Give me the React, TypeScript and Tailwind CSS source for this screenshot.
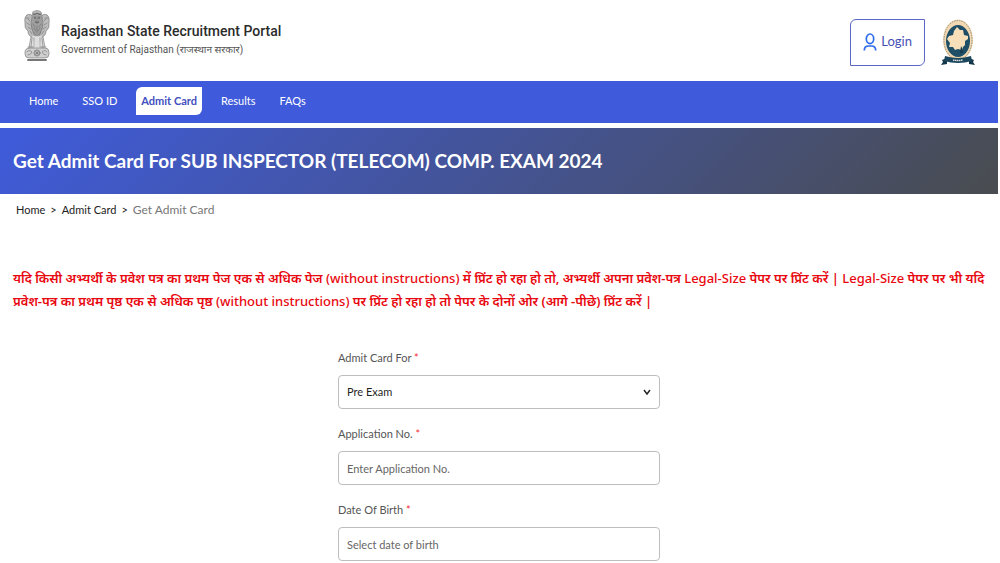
import type { ReactNode } from 'react'

const navItems = ['Home', 'SSO ID', 'Admit Card', 'Results', 'FAQs']

function Emblem() {
  return (
    <svg className="h-[54px] w-7" viewBox="0 0 28 54" fill="none" role="img" aria-label="State Emblem of India">
      <path d="M4 6Q1 8 2 14Q1 19 5 22Q5 27 9 28L19 28Q23 27 23 22Q27 19 26 14Q27 8 24 6Q20 4 19 7L18 3Q14 0 10 3L9 7Q8 4 4 6Z" fill="#bdbdbd" />
      <path d="M9 8Q14 3 19 8L20 17Q18 25 14 27Q10 25 8 17Z" fill="#9f9f9f" />
      <path d="M8 27L6 39H10L11 29L12 39H16L17 29L18 39H22L20 27Z" fill="#dedede" />
      <rect x="2" y="39" width="24" height="10" rx="4" fill="#cfcfcf" />
      <rect x="4" y="50" width="20" height="2" rx="1" fill="#777777" />
      <g stroke="#6f6f6f" strokeWidth="0.6" strokeLinecap="round">
        <path d="M4 6Q1 8 2 14Q1 19 5 22Q5 27 9 28M24 6Q27 8 26 14Q27 19 23 22Q23 27 19 28M9 7Q8 4 4 6M19 7Q20 4 24 6M10 3Q14 0 18 3L19 7M10 3L9 7" />
        <path d="M9 8Q7 14 9 20Q11 26 14 27Q17 26 19 20Q21 14 19 8M10 5Q14 3 18 5M11 8H13M15 8H17M12 12Q14 14 16 12M14 9V11" />
        <path d="M10 15L12 18M18 15L16 18M11 19L13 22M17 19L15 22M14 17V24M5 10L7 12M23 10L21 12M4 14L7 16M24 14L21 16M5 18L8 20M23 18L20 20M3 9H6M22 9H25M7 22L9 25M21 22L19 25M10 23L12 27M18 23L16 27" />
        <path d="M8 28L6 38M9 29L8 38M11 29V38M17 29V38M19 29L20 38M20 28L22 38M5 38H11M17 38H23" />
        <rect x="2" y="39" width="24" height="10" rx="4" />
        <circle cx="14" cy="44" r="3" />
        <path d="M14 41V47M11 44H17M12 42L16 46M16 42L12 46M4 43Q6 40 9 43Q8 46 5 46M24 43Q22 40 19 43Q20 46 23 46" />
      </g>
      <path d="M10 6Q14 3 18 6M11 9H13M15 9H17M12 13Q14 15 16 13" stroke="#4d4d4d" strokeWidth="0.8" />
    </svg>
  )
}

function BoardSeal() {
  return (
    <svg className="h-12 w-9" viewBox="0 0 36 48" role="img" aria-label="Board seal">
      <ellipse cx="18" cy="22" rx="15" ry="20.5" fill="#f3d9b1" />
      <ellipse cx="18" cy="22" rx="14" ry="19.5" fill="none" stroke="#8d8f84" strokeWidth="1" strokeDasharray="1.5 1" />
      <ellipse cx="18" cy="23" rx="12" ry="16" fill="#1f4f66" />
      <path d="M17 9L20 12L23 12L24 17L28 18L28 21L25 23L25 27L23 29L22 32L18 31L15 32L13 29L9 29L10 25L7 21L9 18L13 17L14 13Z" fill="#f6dfb9" />
      <path d="M20 35L21 28L22 30L23 35Z" fill="#17384d" />
      <path d="M2 42L7 40V46L1 47L3 44ZM34 42L29 40V46L35 47L33 44Z" fill="#14374a" />
      <path d="M5 38Q18 42 31 38L32 43Q18 47 4 43Z" fill="#1c465c" />
      <path d="M13 42Q18 43 23 42" fill="none" stroke="#d8dfe0" strokeWidth="1.5" strokeDasharray="1.5 0.5" />
    </svg>
  )
}

function UserIcon() {
  return (
    <svg className="h-[18px] w-[14px]" viewBox="0 0 14 18" fill="none" stroke="#2f6bea" strokeWidth="1.7" aria-hidden="true">
      <ellipse cx="7" cy="5.8" rx="3.7" ry="4.8" />
      <path d="M1.3 17.5Q1.3 13 5.5 13H8.500Q12.700 13 12.700 17.500" />
    </svg>
  )
}

const Field = ({ id, label, children }: { id: string; label: string; children: ReactNode }) => {
  return (
    <div className="mb-4">
      <label htmlFor={id} className="block text-[11px] leading-[18px] text-[#555555] mb-2">
        {label} <span className="text-red-500">*</span>
      </label>
      {children}
    </div>
  )
}

const Page = () => {
  return (
    <div className="mr-0.5 bg-white font-['Lato','Noto_Sans',sans-serif]">
      <header className="flex items-start justify-between pl-[23px] pr-[22px] pt-[9px] pb-[15px]">
        <div className="flex items-center">
          <Emblem />
          <div className="ml-[10px] pt-2 font-['Roboto','Noto_Sans',sans-serif]">
            <div className="text-sm leading-5 font-medium text-[#2b2b2b]">
              Rajasthan State Recruitment Portal
            </div>
            <div className="text-[10px] leading-[18px] text-[#555555]">
              Government of Rajasthan (राजस्थान सरकार)
            </div>
          </div>
        </div>
        <div className="flex items-center gap-[15px] pt-[9px]">
          <button
            type="button"
            className="flex h-[47px] items-center gap-1 border border-[#5c66c4] rounded-tl-md rounded-br-md px-3 text-[13px] text-[#4650b4] cursor-pointer"
          >
            <UserIcon /> Login
          </button>
          <BoardSeal />
        </div>
      </header>
      <nav className="flex h-[42px] items-center gap-[14px] bg-[#3f5bdb] pb-[2px] pl-6 text-[11px] text-white">
        {navItems.map((item) => (
          <a
            key={item}
            href="#"
            className={
              item === 'Admit Card'
                ? 'rounded-tl-md rounded-br-md bg-white px-[5px] py-[6px] leading-4 font-bold text-[#3f4fc0]'
                : 'px-[5px] py-[6px] leading-4'
            }
          >
            {item}
          </a>
        ))}
      </nav>
      <div className="mt-[5px] flex h-[66px] items-center bg-[linear-gradient(135deg,#3f5bdb_0%,#494c4f_100%)] px-[13px]">
        <h1 className="text-[19px] font-bold text-white">
          Get Admit Card For SUB INSPECTOR (TELECOM) COMP. EXAM 2024
        </h1>
      </div>
      <div className="flex gap-[5px] px-4 pt-2 text-[11px] leading-4 text-[#222222]">
        <a href="#">Home</a>
        <span>&gt;</span>
        <a href="#">Admit Card</a>
        <span>&gt;</span>
        <span className="text-xs leading-4 text-[#777777]">Get Admit Card</span>
      </div>
      <p className="mt-[49px] px-[13px] text-[13px] leading-[23px] font-semibold text-[#e8080f] font-['Noto_Sans',sans-serif]">
        यदि किसी अभ्यर्थी के प्रवेश पत्र का प्रथम पेज एक से अधिक पेज{' '}
        <span className="font-medium">(without instructions)</span> में प्रिंट हो रहा हो तो, अभ्यर्थी अपना प्रवेश-पत्र{' '}
        <span className="font-medium">Legal-Size</span> पेपर पर प्रिंट करें |{' '}
        <span className="font-medium">Legal-Size</span> पेपर पर भी यदि प्रवेश-पत्र का प्रथम पृष्ठ एक से अधिक पृष्ठ{' '}
        <span className="font-medium">(without instructions)</span> पर प्रिंट हो रहा हो तो पेपर के दोनों ओर (आगे -पीछे)
        प्रिंट करें |
      </p>
      <form className="mx-auto mt-9 w-full max-w-[322px]">
        <Field id="exam" label="Admit Card For">
          <div className="relative">
            <select
              id="exam"
              className="block h-[34px] w-full appearance-none rounded-[4px] border border-[#bdbdbd] bg-white px-2 text-[11px] text-[#1f1f1f]"
            >
              <option>Pre Exam</option>
            </select>
            <svg
              className="pointer-events-none absolute right-[9px] top-[13px] h-2 w-2"
              viewBox="0 0 8 8"
              fill="none"
              stroke="#222222"
              strokeWidth="1.4"
            >
              <path d="M1 2L4 6L7 2" />
            </svg>
          </div>
        </Field>
        <Field id="application" label="Application No.">
          <input
            id="application"
            type="text"
            placeholder="Enter Application No."
            className="block h-[34px] w-full rounded-[4px] border border-[#bdbdbd] px-2 text-[11px] placeholder:text-[#666666]"
          />
        </Field>
        <Field id="dob" label="Date Of Birth">
          <input
            id="dob"
            type="text"
            placeholder="Select date of birth"
            className="block h-[34px] w-full rounded-[4px] border border-[#bdbdbd] px-2 text-[11px] placeholder:text-[#666666]"
          />
        </Field>
      </form>
    </div>
  )
}

export default Page
